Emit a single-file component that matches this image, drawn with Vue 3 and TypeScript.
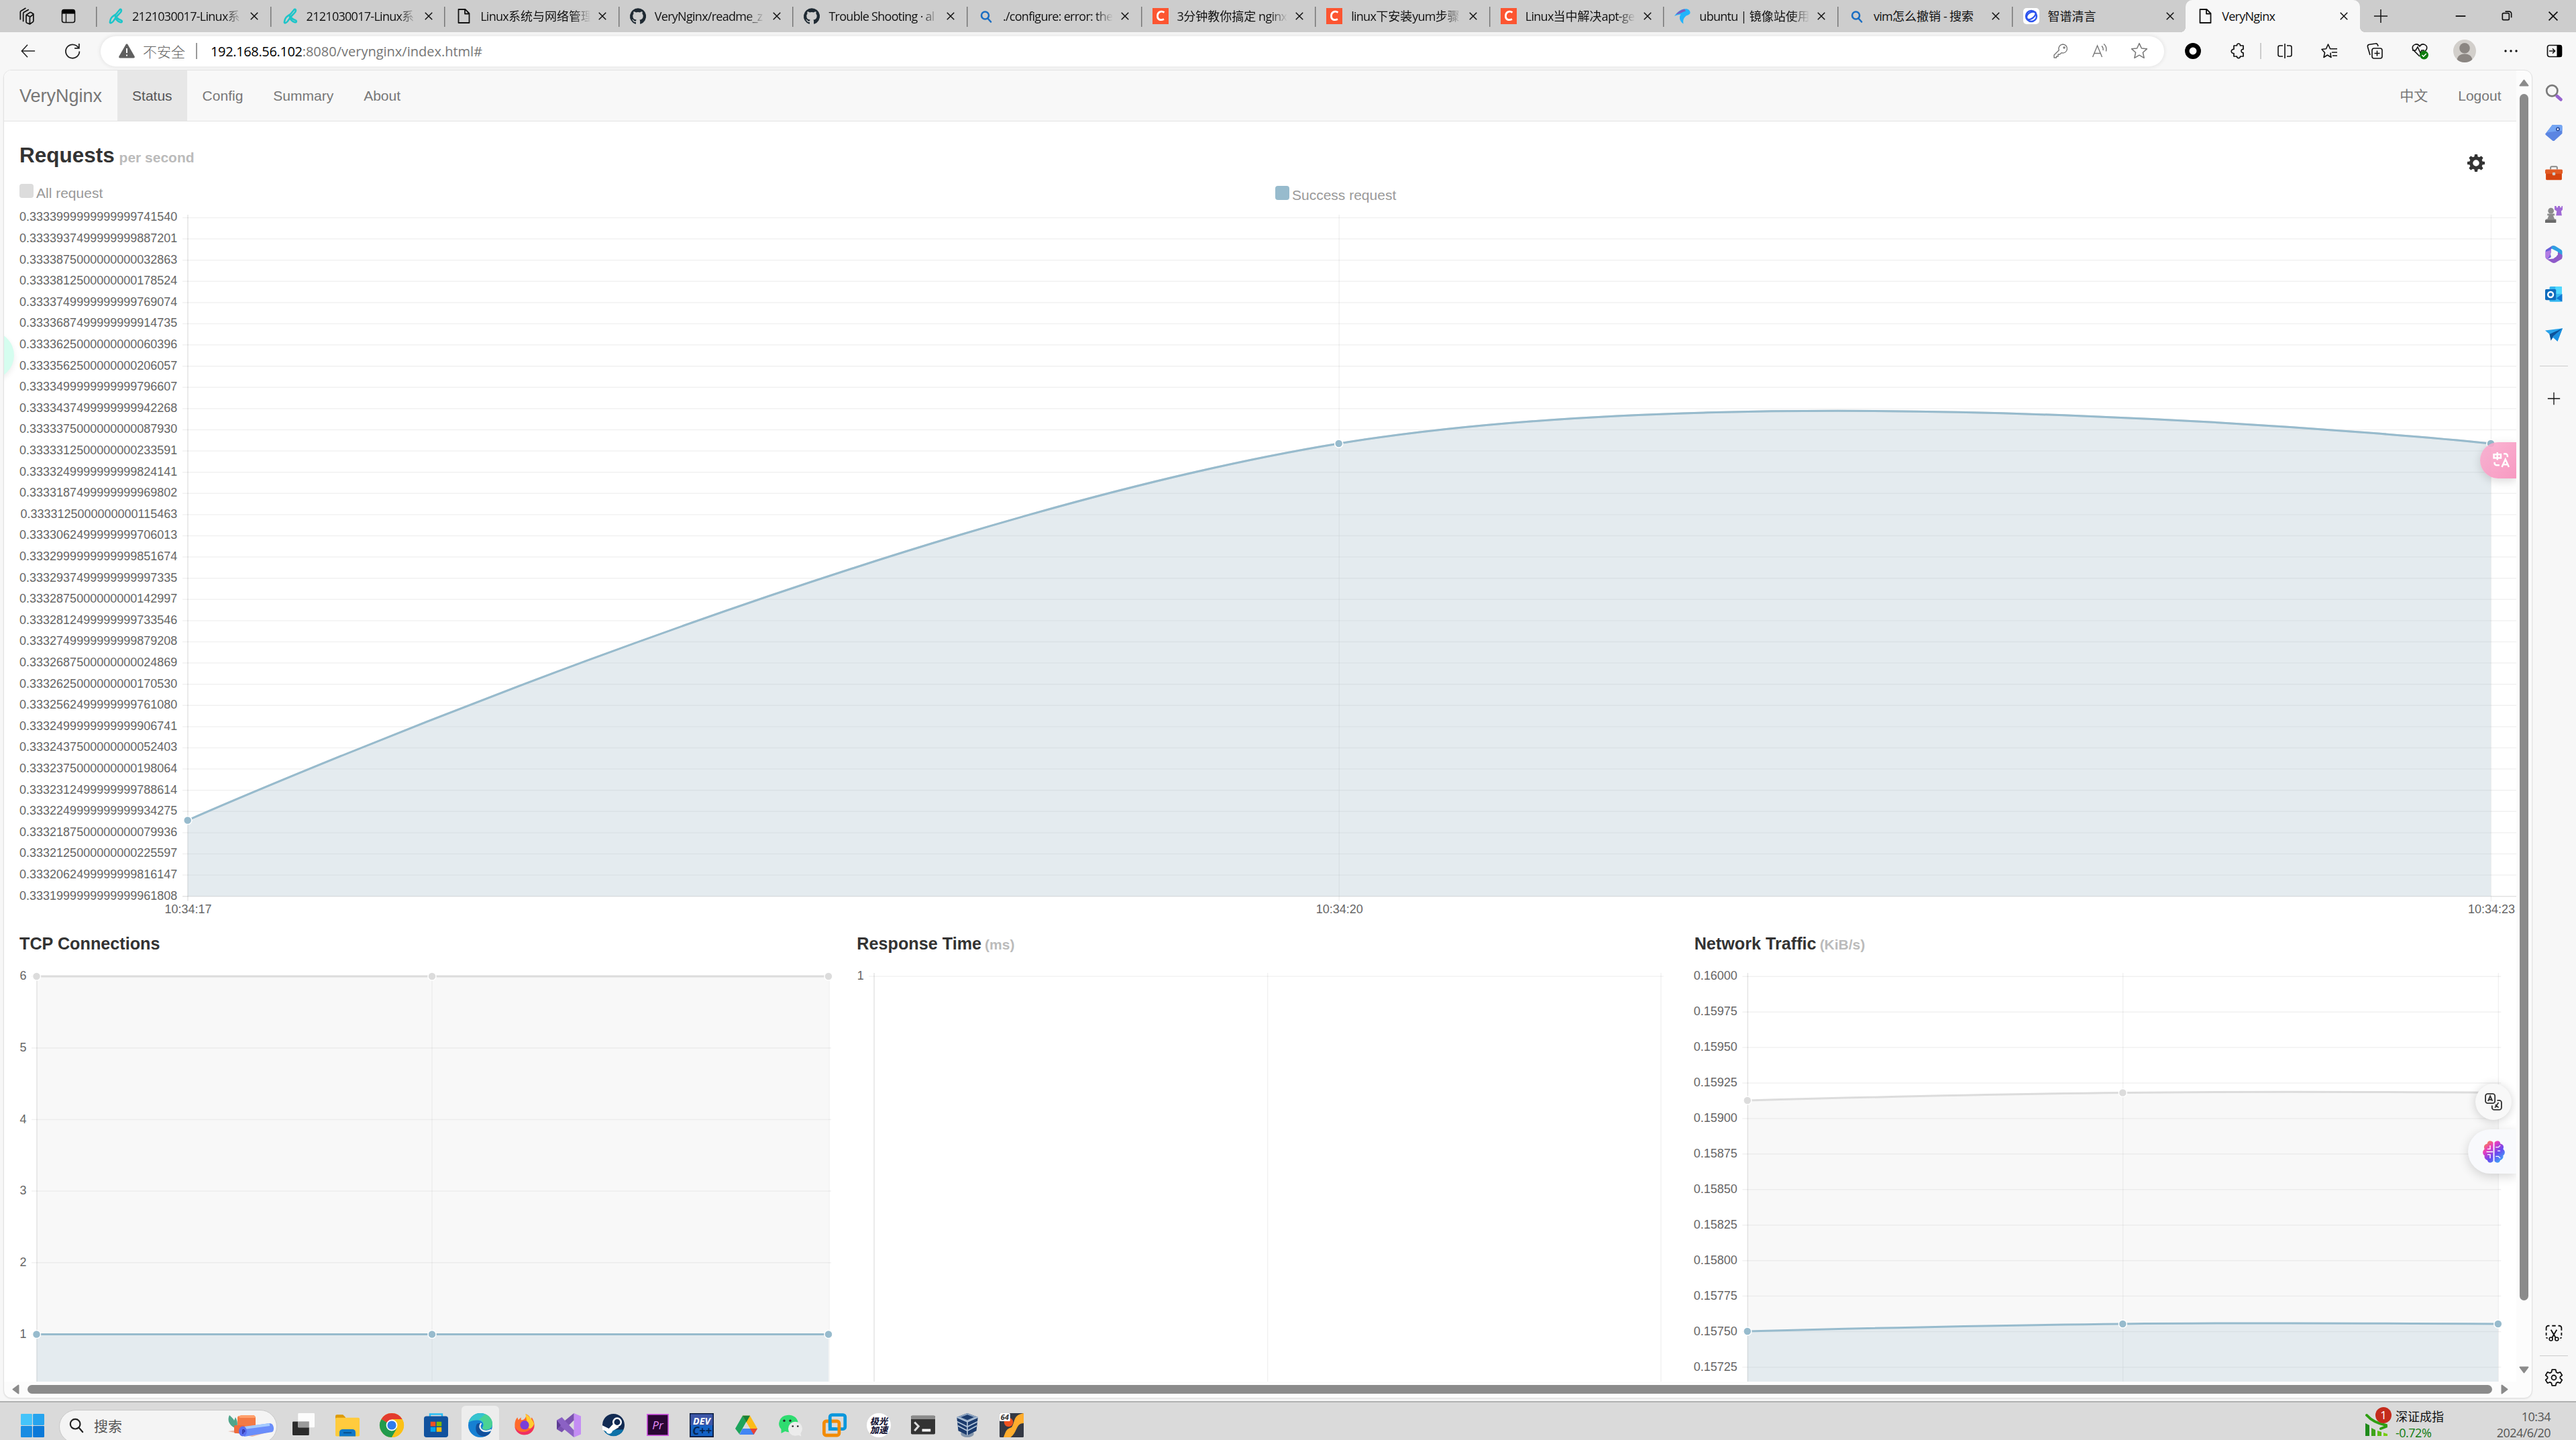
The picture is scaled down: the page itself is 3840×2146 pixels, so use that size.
<script setup lang="ts">
interface Series { color: string; fill: string; points: [number, number][] }
interface Chart {
  box: [number, number, number, number]
  xs: number[]
  rows: { y: number; label: string }[]
  right: number
  top: number
  bottom: number
  labelX: number
  times: string[]
  series: Series[]
}

const GREY = '#dcdcdc'
const GREY_FILL = 'rgba(220,220,220,0.2)'
const BLUE = '#97bbcd'
const BLUE_FILL = 'rgba(151,187,205,0.2)'

const rows = (start: number, step: number, labels: string[]) =>
  labels.map((label, i) => ({ label, y: start + i * step }))

// Smooths a three point line, the middle point carries the tension
function curve(p: [number, number][]): string {
  const [a, m, b] = p
  const d1 = Math.hypot(m[0] - a[0], m[1] - a[1])
  const d2 = Math.hypot(b[0] - m[0], b[1] - m[1])
  const f1 = (0.4 * d1) / (d1 + d2)
  const f2 = (0.4 * d2) / (d1 + d2)
  const dx = b[0] - a[0]
  const dy = b[1] - a[1]
  return `M${a[0]} ${a[1]}C${a[0]} ${a[1]} ${m[0] - f1 * dx} ${m[1] - f1 * dy} ${m[0]} ${m[1]}`
    + `C${m[0] + f2 * dx} ${m[1] + f2 * dy} ${b[0]} ${b[1]} ${b[0]} ${b[1]}`
}
const area = (s: Series, bottom: number) =>
  `${curve(s.points)}L${s.points[2][0]} ${bottom}L${s.points[0][0]} ${bottom}Z`

// Splits a tab title into Latin and Chinese runs, which are spaced differently
const runs = (s: string) =>
  (s.match(/[\u4e00-\u9fff]+|[^\u4e00-\u9fff]+/g) ?? []).map(text => ({ text, han: /[\u4e00-\u9fff]/.test(text) }))

const decimals = [
  '3333999999999999741540', '3333937499999999887201', '3333875000000000032863', '3333812500000000178524',
  '3333749999999999769074', '3333687499999999914735', '3333625000000000060396', '3333562500000000206057',
  '3333499999999999796607', '3333437499999999942268', '3333375000000000087930', '3333312500000000233591',
  '3333249999999999824141', '3333187499999999969802', '3333125000000000115463', '3333062499999999706013',
  '3332999999999999851674', '3332937499999999997335', '3332875000000000142997', '3332812499999999733546',
  '3332749999999999879208', '3332687500000000024869', '3332625000000000170530', '3332562499999999761080',
  '3332499999999999906741', '3332437500000000052403', '3332375000000000198064', '3332312499999999788614',
  '3332249999999999934275', '3332187500000000079936', '3332125000000000225597', '3332062499999999816147',
  '3331999999999999961808',
]
const reqPoints: [number, number][] = [[279.7, 1222.5], [1995.7, 661], [3713, 661]]

const requests: Chart = {
  box: [6, 305, 3745, 1086],
  xs: [280, 1996.3, 3713.5],
  rows: rows(324.5, 31.6, decimals.map(d => '0.' + d)),
  right: 3760, top: 320, bottom: 1335.7, labelX: 264.3,
  times: ['10:34:17', '10:34:20', '10:34:23'],
  series: [
    { color: GREY, fill: GREY_FILL, points: reqPoints },
    { color: BLUE, fill: BLUE_FILL, points: reqPoints },
  ],
}

const panels: { title: string; unit: string; chart: Chart }[] = [
  {
    title: 'TCP Connections', unit: '',
    chart: {
      box: [6, 1421, 1248.33, 638],
      xs: [55, 644, 1236], rows: rows(1455, 106.7, ['6', '5', '4', '3', '2', '1']),
      right: 1239, top: 1450, bottom: 2100, labelX: 39.5, times: [],
      series: [
        { color: GREY, fill: GREY_FILL, points: [[54.5, 1455], [644, 1455], [1235, 1455]] },
        { color: BLUE, fill: BLUE_FILL, points: [[54.5, 1988.5], [644, 1988.5], [1235, 1988.5]] },
      ],
    },
  },
  {
    title: 'Response Time', unit: '(ms)',
    chart: {
      box: [1254.33, 1421, 1248.33, 638],
      xs: [1303.4, 1890, 2476.3], rows: rows(1455, 100, ['1']),
      right: 2480, top: 1450, bottom: 2100, labelX: 1288, times: [], series: [],
    },
  },
  {
    title: 'Network Traffic', unit: '(KiB/s)',
    chart: {
      box: [2502.67, 1421, 1248.33, 638],
      xs: [2605, 3164.3, 3724],
      rows: rows(1455.2, 52.93, ['0.16000', '0.15975', '0.15950', '0.15925', '0.15900', '0.15875', '0.15850', '0.15825', '0.15800', '0.15775', '0.15750', '0.15725']),
      right: 3728, top: 1450, bottom: 2100, labelX: 2589.5, times: [],
      series: [
        { color: GREY, fill: GREY_FILL, points: [[2604.5, 1640], [3164, 1628.5], [3723.5, 1628.5]] },
        { color: BLUE, fill: BLUE_FILL, points: [[2604.5, 1984], [3164, 1973], [3723.5, 1973]] },
      ],
    },
  },
]

const tabs = [
  { icon: 'knot', label: '2121030017-Linux系', fade: true },
  { icon: 'knot', label: '2121030017-Linux系', fade: true },
  { icon: 'page', label: 'Linux系统与网络管理', fade: true },
  { icon: 'github', label: 'VeryNginx/readme_z', fade: true },
  { icon: 'github', label: 'Trouble Shooting · al', fade: true },
  { icon: 'find', label: './configure: error: the', fade: true },
  { icon: 'csdn', label: '3分钟教你搞定 nginx', fade: true },
  { icon: 'csdn', label: 'linux下安装yum步骤', fade: true },
  { icon: 'csdn', label: 'Linux当中解决apt-ge', fade: true },
  { icon: 'bird', label: 'ubuntu | 镜像站使用', fade: true },
  { icon: 'find', label: 'vim怎么撤销 - 搜索', fade: false },
  { icon: 'zhipu', label: '智谱清言', fade: false },
]

const icons: Record<string, string> = {
  spaces: '<g fill="none" stroke="#111" stroke-width="1.600" stroke-linejoin="round"><path d="M12 11.500a2 2 0 0 1 1-1.700l4-2.600a2 2 0 0 1 2 0l3 1.800v9.500a2 2 0 0 1-1 1.700L17 23l-4-1.500a1.500 1.500 0 0 1-1-1.500zM12.500 10.500l5 2.500 4.500-3.500M17 13v9.500M8 19.500V8.500a2 2 0 0 1 1-1.700L15.500 3M4 17V6.500a2 2 0 0 1 1-1.700L11.500 1"/></g>',
  pane: '<rect x="2.500" y="2.500" width="19" height="19" rx="3" fill="none" stroke="#111" stroke-width="1.600"/><path d="M2.500 8.500V5a3 3 0 0 1 3-3h13a3 3 0 0 1 3 3v3.500z" fill="#000"/><path d="M8.500 8.500v13" stroke="#111" stroke-width="1.300"/>',
  knot: '<g fill="none" stroke="#1cc5c9" stroke-width="2.600" stroke-linecap="round" stroke-linejoin="round"><path d="M4 20c1-7 5-8 9-11l5-6c2-3 4 0 2 3-3 4-7 6-10 12-2 4-7 6-6 2zM12 10c0 3 4 7 8 8 3 1 2 4-1 3-4-1-7-5-7-8"/></g>',
  page: '<path d="M4.500 2h10l6 6v14h-16zM14 2v6.500h6" fill="none" stroke="#111" stroke-width="1.800" stroke-linejoin="round"/>',
  github: '<path fill="#1f2a33" d="M12 .3a12 12 0 0 0-3.800 23.400c.6.100.8-.300.8-.600v-2.200c-3.300.700-4-1.400-4-1.400-.600-1.400-1.400-1.800-1.400-1.800-1-.700.100-.700.100-.700 1.200.100 1.900 1.200 1.900 1.200 1 1.800 2.800 1.300 3.500 1 0-.800.400-1.300.700-1.600-2.700-.300-5.500-1.300-5.500-6 0-1.200.500-2.300 1.300-3.100-.200-.400-.600-1.600 0-3.200 0 0 1-.300 3.400 1.200a11.500 11.500 0 0 1 6 0c2.300-1.500 3.300-1.200 3.300-1.200.700 1.600.200 2.800.100 3.200.8.800 1.300 1.900 1.300 3.200 0 4.600-2.800 5.600-5.500 5.900.5.400.9 1 .9 2.200v3.300c0 .300.100.700.800.600A12 12 0 0 0 12 .3"/>',
  find: '<g fill="none" stroke="#1b6ec2" stroke-width="2.600" stroke-linecap="round"><circle cx="10.500" cy="11" r="5.500"/><path d="M14.500 15.500l4.500 5"/></g>',
  csdn: '<rect width="24" height="24" fill="#fc5531"/><path d="M17.500 6.500c-4-2.500-9.500-1.500-10 4.500-.4 6.500 4.500 8 9.500 5.500" fill="none" stroke="#fff" stroke-width="2.800"/>',
  bird: '<path d="M0 12C4 6 9 2 15 1.500c5-1 9 2 8.500 6-1 3-5 3-7 5-3 3-4 6-3 11-6-4-7-10-4-14-3 0-6 1-9.500 2.500z" fill="#22b4fb"/><path d="M2 9.500C6 5 10 2.500 15 1.500l2 3C12 6 7 9 2 9.500z" fill="#7d5bc0"/>',
  zhipu: '<rect width="24" height="24" rx="5" fill="#fff"/><g fill="none" stroke="#2d54ee" stroke-width="2.400"><circle cx="12" cy="12" r="8"/><path d="M19 7C14 3 5 8 5 14c1 7 12 1 14-6"/></g>',
  close: '<path d="M5 5l14 14M19 5L5 19" stroke="#111" stroke-width="2" />',
  plus: '<path d="M12 1v22M1 12h22" stroke="#111" stroke-width="1.600"/>',
  min: '<path d="M4 12h16" stroke="#111" stroke-width="2"/>',
  restore: '<g fill="none" stroke="#111" stroke-width="2"><rect x="4" y="8" width="12" height="12" rx="2"/><path d="M9 5h7a4 4 0 0 1 4 4v7"/></g>',
  back: '<path d="M23 12H2M11 2L1.500 12 11 22" fill="none" stroke="#222" stroke-width="1.700"/>',
  reload: '<path d="M21.500 12A9.800 9.800 0 1 1 18 4.500L20.500 7M21 1v6.500h-6.500" fill="none" stroke="#222" stroke-width="1.700"/>',
  warn: '<path d="M12 1.500c1 0 1.300.600 1.700 1.200L23.600 20c.6 1.500 0 2.500-1.600 2.500H2C.4 22.500-.2 21.500.4 20L10.300 2.700C10.700 2.100 11 1.500 12 1.500z" fill="#5f5f5f"/><path d="M12 8v7M12 17.500v2" stroke="#fff" stroke-width="2"/>',
  key: '<g fill="none" stroke="#777" stroke-width="1.400" stroke-linejoin="round"><path d="M15 2a6.500 6.500 0 1 1-2 12.700L10.500 17H8v3H5.500v2H2v-4l7.300-7.200A6.500 6.500 0 0 1 15 2z"/><circle cx="17" cy="7" r="1"/></g>',
  read: '<path d="M1.500 21L8.500 4l7 17M4 15.500h9M15 4.500c2 2 2.500 4 2 6.500M18 1.500c4 3 4.500 7 3.500 11" fill="none" stroke="#777" stroke-width="1.400"/>',
  star: '<path d="M12 1.500l3.100 6.800 7.400.8-5.500 5 1.600 7.400-6.600-3.800-6.600 3.800L7 14.100l-5.500-5 7.400-.8z" fill="none" stroke="#777" stroke-width="1.400" stroke-linejoin="round"/>',
  ring: '<circle cx="12" cy="12" r="8.700" fill="#fff" stroke="#000" stroke-width="6.500"/>',
  puzzle: '<path d="M6 4h4.500c-.5-4 5.500-4 5 0H20v5.500c-4-.5-4 5.500 0 5V20h-4.500c.5 3.500-5.500 3.500-5 0H6v-4.500c-5 .500-5-6.500 0-6z" fill="none" stroke="#111" stroke-width="1.700" stroke-linejoin="round"/>',
  split: '<path d="M9 4H4.500A2.500 2.500 0 0 0 2 6.500v11A2.500 2.500 0 0 0 4.500 20H9M15 4h4.500A2.500 2.500 0 0 1 22 6.500v11a2.500 2.500 0 0 1-2.500 2.500H15M12 1v22" fill="none" stroke="#111" stroke-width="1.600"/>',
  favs: '<path d="M13.500 14.500l-.5 2 1 5-5.500-3.500L3 21.500l1.500-7L0 9.500l6.500-.7L9.500 2l3 6.800H23M15 14h8M16 19h7" fill="none" stroke="#111" stroke-width="1.600" stroke-linejoin="round"/>',
  collect: '<g fill="none" stroke="#111" stroke-width="1.600"><rect x="8" y="8" width="15" height="15" rx="3"/><path d="M15.500 11.500v8M11.500 15.500h8M5 18l-3.500-12A3 3 0 0 1 3 2.500l10-1.500a3 3 0 0 1 3.500 2l.5 2"/></g>',
  health: '<path d="M12 20L2 10C-1 3 8-1 12 5c4-6 13-2 10 5l-2 2M1 11h5l3-5 4 9 2-4h4" fill="none" stroke="#111" stroke-width="1.600"/><circle cx="18.500" cy="18" r="6.500" fill="#107c10"/><path d="M15.500 18l2.200 2.200 4-4.200" fill="none" stroke="#fff" stroke-width="1.500"/>',
  avatar: '<circle cx="12" cy="12" r="12" fill="#d2cfcb"/><circle cx="12" cy="9" r="5.500" fill="#8b8682"/><path d="M4 21c1-8 15-8 16 0a12 12 0 0 1-16 0z" fill="#8b8682"/>',
  dots: '<g fill="#111"><circle cx="4" cy="12" r="1.700"/><circle cx="12" cy="12" r="1.700"/><circle cx="20" cy="12" r="1.700"/></g>',
  side: '<rect x="1.500" y="3.500" width="21" height="17" rx="3" fill="none" stroke="#111" stroke-width="1.700"/><path d="M15.500 3h5a2.500 2.500 0 0 1 2.500 2.500v13a2.500 2.500 0 0 1-2.500 2.500h-5z" fill="#000"/><path d="M4 12h8M9 8.500l3.500 3.500L9 15.500" fill="none" stroke="#111" stroke-width="1.700"/>',
  sSearch: '<circle cx="9.500" cy="9.500" r="7.500" fill="none" stroke="#7b7b7b" stroke-width="2.500"/><path d="M16.500 17l5 4.500" stroke="#9764cf" stroke-width="4.500" stroke-linecap="round"/>',
  tag: '<path d="M10 1h11c1.500 0 2.500 1 2.500 2v10L13 22.500c-1 .800-2 .800-3 0L1 15c-1-1-1-2 0-2.500z" fill="#5b85e2"/><path d="M10 1h11c1.500 0 2.500 1 2.500 2v6L2 11.500z" fill="#74a5f3"/><circle cx="17.500" cy="7" r="2" fill="#fff" stroke="#2a4b9b" stroke-width="1.500"/>',
  toolbox: '<path d="M7.500 7V4.500A1.500 1.500 0 0 1 9 3h6a1.500 1.500 0 0 1 1.500 1.500V7" fill="none" stroke="#8a8a8a" stroke-width="1.800"/><path d="M1 12h22v8a1.500 1.500 0 0 1-1.500 1.500h-19A1.500 1.500 0 0 1 1 20z" fill="#d6440f"/><rect y="7" width="24" height="6" rx="1.500" fill="#e25b24"/><rect x="10" y="11" width="4" height="4" rx="1" fill="#ccc"/>',
  chess: '<g fill="#8c8c8c"><circle cx="8" cy="7.500" r="4"/><path d="M3 11.500h10V14h-2l2 5h2v4H1v-4h2l2-5H3z"/></g><path d="M13 1h2.500v2h2V1h3v2h2V1H24v5l-2 2 1 6h-8l1-6-3-2z" fill="#a06ad6"/><path d="M0 20h15v4H0z" fill="#6a6a6a"/>',
  m365: '<path d="M1.500 5.500L9 .8c1.500-.8 3-.8 4.500 0L8 5v11l-5 3c-1.500-.500-2.500-2-2.500-3.500V8c0-1 .3-2 1-2.500z" fill="#6a5fd8"/><path d="M9 .8c1.500-.8 3.500-.8 5 0l7.500 4.500C23 6.300 23.500 7 23.500 8.500V16l-6-3.500V8.500L8.500 4z" fill="#2f9fe2"/><path d="M8 6v5l-5 8c-1-.4-2.500-2-2.500-3.500V8.500z" fill="#b27be3"/><path d="M23.500 13v3c0 1.500-.5 2.500-1.500 3l-7.500 4.300c-1.500.8-3.500.8-5 0L2.500 19l9-1 6-5.500V9z" fill="#8f5ac9"/><circle cx="12" cy="12" r="4.500" fill="#f7f7f7"/>',
  outlook: '<rect x="6" y="1" width="17" height="21" rx="1.500" fill="#35b8f1"/><path d="M14 1h9v10h-9z" fill="#50d9ff"/><path d="M23.500 11v11l-8-5z" fill="#0f78d4"/><rect x="0" y="4.500" width="15" height="15" rx="1.500" fill="#0f6cbd"/><circle cx="7.500" cy="12" r="3.600" fill="none" stroke="#fff" stroke-width="2.300"/>',
  plane: '<path d="M0 6l24-3-7 18-6-5-3 3-2-8z" fill="#2aa3ea"/><path d="M24 3L6 11l2 9 3-6z" fill="#0d5299"/><path d="M24 3L11 14l6 7z" fill="#1b8fe0"/>',
  snip: '<path d="M1.500 9V5.500a3 3 0 0 1 3-3H6M9.500 2.500h5M18 2.500h1.500a3 3 0 0 1 3 3V9M22.500 12v4M1.500 12v4M1.500 18.500c.500 1 1 1 2 1M22.500 18.500c-.500 1-1 1-2 1M8 8l6.500 11M16 8L9.500 19" fill="none" stroke="#111" stroke-width="1.700"/><g fill="none" stroke="#111" stroke-width="1.500"><circle cx="8" cy="20.800" r="2.300"/><circle cx="16" cy="20.800" r="2.300"/></g>',
  cog: '<g fill="none" stroke="#111" stroke-width="1.700" stroke-linejoin="round"><path d="M9.500 1h5l.8 3.500 2 1.200 3.500-1.200 2.500 4.300L20.700 11v2l2.600 2.200-2.500 4.300-3.500-1.200-2 1.200-.8 3.500h-5l-.8-3.500-2-1.200-3.500 1.200L.7 15.200 3.300 13v-2L.7 8.800l2.500-4.300 3.500 1.200 2-1.200z"/><circle cx="12" cy="12" r="3.200"/></g>',
  gear: '<path fill="#333" fill-rule="evenodd" d="M10.200 0h3.600l.6 3.200 2 .800L19.200 2.200l2.600 2.600L20 7.600l.8 2 3.200.6v3.600l-3.200.6-.8 2 1.800 2.800-2.600 2.600-2.800-1.800-2 .8-.6 3.200h-3.600l-.6-3.200-2-.8-2.800 1.800-2.600-2.600L4 16.400l-.8-2L0 13.800v-3.600l3.200-.6.8-2L2.200 4.800l2.600-2.600L7.600 4l2-.8zM12 7.600a4.400 4.400 0 1 0 0 8.800 4.400 4.400 0 0 0 0-8.800z"/>',
  win: '<g fill="#1f9ae8"><rect width="11.600" height="11.600" rx=".8" fill="#44c4fa"/><rect x="12.400" width="11.600" height="11.600" rx=".8" fill="#26a4ee"/><rect y="12.400" width="11.600" height="11.600" rx=".8" fill="#188ce2"/><rect x="12.400" y="12.400" width="11.600" height="11.600" rx=".8" fill="#0b79d8"/></g>',
  find2: '<g fill="none" stroke="#222" stroke-width="2.400" stroke-linecap="round"><circle cx="10" cy="10" r="8"/><path d="M16 16l6 7"/></g>',
  task: '<rect x="0" y="9" width="18" height="15" rx="1" fill="#2b2b2b"/><rect x="6" y="0" width="18" height="15.500" rx="1" fill="#fff" opacity=".92"/><path d="M6 9h12v6.500H6z" fill="#9b9b9b"/>',
  folder: '<path d="M0 3a1.500 1.500 0 0 1 1.500-1.500h6L10 4v3H0z" fill="#dc9a0a"/><rect y="4.500" width="24" height="18.500" rx="1.200" fill="#ffcb3d"/><path d="M4 23v-4a3 3 0 0 1 3-3h10a3 3 0 0 1 3 3v4z" fill="#0f78c9"/><path d="M8 19.500h8" stroke="#084d87" stroke-width="1.200"/>',
  chrome: '<circle cx="12" cy="12" r="12" fill="#fbc116"/><path d="M12 12L1.600 6A12 12 0 0 1 22.400 6z" fill="#e33b2e"/><path d="M12 12L1.600 6A12 12 0 0 0 12 24l5.200-9z" fill="#229b4c"/><path d="M12 12V6h10.400A12 12 0 0 1 12 24l5.200-9z" fill="#fbc116"/><circle cx="12" cy="12" r="5.600" fill="#fff"/><circle cx="12" cy="12" r="4.400" fill="#2f7bea"/>',
  store: '<path d="M6 4V1h12v3" fill="none" stroke="#26bdf5" stroke-width="1.600"/><rect y="3" width="24" height="21" rx="2.500" fill="#11529e"/><path d="M6.500 8.500h5v4.500h-5z" fill="#f25022"/><path d="M12.500 8.500h5v4.500h-5z" fill="#7fba00"/><path d="M6.500 14h5v4.500h-5z" fill="#00a4ef"/><path d="M12.500 14h5v4.500h-5z" fill="#ffb900"/>',
  edge: '<circle cx="12" cy="12" r="12" fill="#1680d3"/><path d="M.3 9.500C2 3 7 0 12 0c7 0 12 5 12 10.500 0 4-3 6-6.500 6-3 0-4-1.500-3-3 1.500-3-1-6.500-5-6.500-4 0-8 1-9.200 2.500z" fill="#35c4cf"/><path d="M17 1c5 2 7 6 7 9.500 0 4-3 6-6.500 6-3 0-4-1.500-3-3 2-3 0-7-4-7z" fill="#54d87a" opacity=".7"/><path d="M8 12c-2 6 2 12 9 11 3-1 5-3 5.500-5-4 2-9 1-11-3-1-2 0-4 1-5-2-.500-4 0-4.500 2z" fill="#114f9c"/><path d="M13 10c-2 2-2 5 1 7 2 1.500 6 1 9-.5" fill="none" stroke="#f1f1f1" stroke-width="1.500"/>',
  firefox: '<path d="M12 23.500C5 23.500 1 18 1 12.500 1 9 2 6 4 4l1 3 3-3v3c3 0 4-1 5-3 1-1.500 1-3 0-4 3 1 5 3 6 6l1-2c2 3 3 6 3 9 0 6-5 10.500-11 10.500z" fill="#ff6a2a"/><path d="M13 0c4 2 8 7 9.500 11-1 4-4 6-6 5C15 9 14 7 13 0z" fill="#ffcd31"/><circle cx="12" cy="12.500" r="5" fill="#7a3fd8"/><path d="M1 14c2 5 7 7 12 6 4-1 8-4 9.500-8 .5 7-5 11.500-10.500 11.500S1.500 20 1 14z" fill="#ef2f64"/>',
  vs: '<path d="M17 0l7 3v18l-7 3z" fill="#c48df4"/><path d="M17 0v7L5 19l-5-3v-2z" fill="#7a52b0"/><path d="M5 4l12 13v7L0 10V7z" fill="#8b61c4"/><path d="M0 7l4 5-4 4z" fill="#5c3a92"/>',
  steam: '<circle cx="12" cy="12" r="12" fill="#112a52"/><path d="M1 17a12 12 0 0 0 22 0z" fill="#0d72a8"/><path d="M0 12.500l7 3.500 5-5.500 6 4-7 4c-1 4-6 4-7 .500l-4-2z" fill="#fff"/><circle cx="16" cy="9" r="4.200" fill="#112a52" stroke="#fff" stroke-width="1.800"/>',
  pr: '<rect x=".6" y=".6" width="22.800" height="22.800" fill="#2a0634" stroke="#d65ce8" stroke-width="1.200"/><text x="12" y="16.500" font-size="12.500" fill="#e389f5" text-anchor="middle" font-family="Open Sans">Pr</text>',
  dev: '<rect x=".6" y=".6" width="22.800" height="22.800" fill="#1461c4" stroke="#0a1a3a" stroke-width="1.200"/><path d="M1 1h22v11H1z" fill="#3e57a8"/><text x="12" y="11" font-size="9.500" font-weight="700" fill="#fff" text-anchor="middle" font-family="Open Sans">DEV</text><text x="12.500" y="21.500" font-size="11" font-weight="700" fill="#062551" text-anchor="middle" font-family="Open Sans">C++</text>',
  drive: '<path d="M8 2h8l-4 6.500L4.500 22 0 16z" fill="#1da45c"/><path d="M8 2h8l8 14h-8z" fill="#fcbc17"/><path d="M8 2h8l-4 7z" fill="#188038"/><path d="M8 16h16l-4 6.500H4.500z" fill="#4285f4"/><path d="M16 16h8l-4 6.500z" fill="#ea4335"/><path d="M12 9l4 7H8z" fill="#dadada"/>',
  wechat: '<path d="M9 2a9 8.500 0 1 1-2 16l-4 2v-4A9 8.500 0 0 1 9 2z" fill="#2fdc70"/><circle cx="17" cy="15.500" r="7" fill="#ececec"/><path d="M18 21l5 2-1-4z" fill="#ececec"/><g fill="#222"><circle cx="6" cy="7.500" r="1.100"/><circle cx="12" cy="7.500" r="1.100"/><circle cx="14.500" cy="13" r=".9"/><circle cx="19.500" cy="13" r=".9"/></g>',
  vmware: '<rect x="7.500" y="1.700" width="15" height="14" rx="2" fill="none" stroke="#0a97dc" stroke-width="3.200"/><rect x="1.600" y="8" width="15" height="14" rx="2" fill="none" stroke="#f28b05" stroke-width="3.200"/><path d="M7.500 6v9.700h6" fill="none" stroke="#0a97dc" stroke-width="3.200"/>',
  jiguang: '<circle cx="12" cy="12" r="12" fill="#fff"/><g font-size="8.800" font-weight="900" text-anchor="middle" font-family="Noto Sans CJK SC" fill="#1c1c3c"><text x="12" y="11.500">极光</text><text x="12" y="19.700">加速</text></g>',
  term: '<rect y="2.500" width="24" height="18.500" rx="1.200" fill="#333"/><path d="M0 6V3.700A1.200 1.200 0 0 1 1.200 2.500h21.600A1.200 1.200 0 0 1 24 3.700V6z" fill="#8a8a8a"/><path d="M3.500 9l4 4-4 4.500" fill="none" stroke="#ddd" stroke-width="2"/><path d="M11 17h8.500" stroke="#fff" stroke-width="2.600"/>',
  vbox: '<ellipse cx="12" cy="20.500" rx="6.500" ry="3.500" fill="#8496ac"/><path d="M12 0l10.500 4-1.500 13.500-9 4.500-9-4.500L1.500 4z" fill="#1c3c6e"/><path d="M12 0l10.500 4L12 8.500 1.500 4z" fill="#8ea5c2"/><path d="M12 1.500L18.500 4 12 6.800 5.500 4z" fill="#1c3c6e"/><path d="M12 8.500V22M2 8.500l10 5 10-5M2.500 12.500l9.500 5 9.500-5M1.500 4L12 8.500 22.500 4" stroke="#b4c6da" stroke-width="1.100" fill="none"/>',
  calc64: '<rect width="24" height="24" rx="1" fill="#343944"/><path d="M24 0v10c-8 0-6 9-13 14H4c3-8 3-8 8-10 4-6 1-12 12-14z" fill="#ffad2e"/><circle cx="9" cy="9" r="4.500" fill="#f0521f"/><rect width="10.500" height="8" rx="1" fill="#fff"/><text x="5.200" y="6.700" font-size="7.500" font-weight="700" fill="#333" text-anchor="middle" font-family="Open Sans">64</text>',
  trans: '<g fill="none" stroke="#fff" stroke-width="2.400"><path d="M1 4h10v5H1zM6 1v11M15 3h2.500a3 3 0 0 1 3 3v2M2 15v1.500a3 3 0 0 0 3 3h4M12.500 22L17.500 11l5 11M14.500 18.500h6"/></g>',
  aTrans: '<g fill="none" stroke="#333" stroke-width="1.700"><rect x="1" y="1" width="13" height="13" rx="3"/><path d="M4.500 11l3-7 3 7M5.500 9h4M17 10h3a3 3 0 0 1 3 3v7a3 3 0 0 1-3 3h-7a3 3 0 0 1-3-3v-3M19 13l-5 7M14.500 16l4.500 4"/></g>',
  brain: '<defs><linearGradient id="bg" gradientUnits="userSpaceOnUse" x1="2" y1="0" x2="22" y2="24"><stop offset="0" stop-color="#fb9a32"/><stop offset=".3" stop-color="#e83cc0"/><stop offset=".6" stop-color="#6a4af0"/><stop offset="1" stop-color="#2fc0fc"/></linearGradient></defs><path d="M11.300 2C9-1 5 0 5 3 1 4 1 7 2 9c-3 2-2 6 0 7-1 3 2 5 3 5 1 4 5 3 6.300 1zM12.700 2C15-1 19 0 19 3c4 1 4 4 3 6 3 2 2 6 0 7 1 3-2 5-3 5-1 4-5 3-6.300 1z" fill="url(#bg)"/><path d="M4 12h7M8 5v4H5M8 19v-4H5M14 7h3l2-2M14 17h3l2 2M16 11h3" fill="none" stroke="#fff" stroke-width="1"/>',
}

const tools1 = ['ring', 'puzzle']
const tools2 = ['split', 'favs', 'collect', 'health', 'avatar', 'dots']
const sideIcons = ['sSearch', 'tag', 'toolbox', 'chess', 'm365', 'outlook', 'plane']
const taskIcons = ['task', 'folder', 'chrome', 'store', 'edge', 'firefox', 'vs', 'steam', 'pr', 'dev', 'drive', 'wechat', 'vmware', 'jiguang', 'term', 'vbox', 'calc64']
const charts = [requests]
</script>

<template>
  <div class="screen">
    <div class="tabs">
      <div class="lead">
        <svg class="i26" viewBox="0 0 24 24" v-html="icons.spaces" />
        <svg class="i24" viewBox="0 0 24 24" v-html="icons.pane" />
      </div>
      <div v-for="(t, i) in tabs" :key="i" class="tab">
        <svg class="i24" viewBox="0 0 24 24" v-html="icons[t.icon]" />
        <span class="tab-label" :class="{ fade: t.fade }"><span v-for="(r, k) in runs(t.label)" :key="k" :class="{ han: r.han }">{{ r.text }}</span></span>
        <svg class="i18" viewBox="0 0 24 24" v-html="icons.close" />
      </div>
      <div class="tab active">
        <svg class="i24" viewBox="0 0 24 24" v-html="icons.page" />
        <span class="tab-label">VeryNginx</span>
        <svg class="i18" viewBox="0 0 24 24" v-html="icons.close" />
      </div>
      <svg class="new-tab" viewBox="0 0 24 24" v-html="icons.plus" />
      <div class="win-buttons">
        <span><svg class="i22" viewBox="0 0 24 24" v-html="icons.min" /></span>
        <span><svg class="i20" viewBox="0 0 24 24" v-html="icons.restore" /></span>
        <span><svg class="i22" viewBox="0 0 24 24" v-html="icons.close" /></span>
      </div>
    </div>

    <div class="toolbar">
      <svg class="back" viewBox="0 0 24 24" v-html="icons.back" />
      <svg class="reload" viewBox="0 0 24 24" v-html="icons.reload" />
      <div class="address">
        <svg class="i24" viewBox="0 0 24 24" v-html="icons.warn" />
        <span class="insecure">不安全</span>
        <i class="bar" />
        <span class="url"><b>192.168.56.102</b>:8080/verynginx/index.html#</span>
        <div class="addr-icons">
          <svg class="i24" viewBox="0 0 24 24" v-html="icons.key" />
          <svg class="i24" viewBox="0 0 24 24" v-html="icons.read" />
          <svg class="i26" viewBox="0 0 24 24" v-html="icons.star" />
        </div>
      </div>
      <span v-for="n in tools1" :key="n" class="tool"><svg class="i24" viewBox="0 0 24 24" v-html="icons[n]" /></span>
      <i class="bar light" />
      <span v-for="n in tools2" :key="n" class="tool" :class="n"><svg class="i24" viewBox="0 0 24 24" v-html="icons[n]" /></span>
      <span class="tool last"><svg class="i24" viewBox="0 0 24 24" v-html="icons.side" /></span>
    </div>

    <div class="body">
      <div class="page">
        <div class="content">
          <nav class="navbar">
            <span class="brand">VeryNginx</span>
            <span class="item on">Status</span>
            <span class="item">Config</span>
            <span class="item">Summary</span>
            <span class="item">About</span>
            <span class="item push">中文</span>
            <span class="item">Logout</span>
          </nav>
          <div class="head">
            <h3>Requests <small>per second</small></h3>
            <svg class="gear" viewBox="0 0 24 24" v-html="icons.gear" />
          </div>
          <div class="legend">
            <div><i class="sw grey" />All request</div>
            <div class="second"><i class="sw blue" />Success request</div>
          </div>

          <svg v-for="(c, k) in charts" :key="k" class="chart" :width="c.box[2]" :height="c.box[3]" :viewBox="c.box.join(' ')">
            <g stroke="rgba(0,0,0,0.055)" stroke-width="1.5">
              <line v-for="r in c.rows" :key="r.y" :x1="c.xs[0] - 8" :x2="c.right" :y1="r.y" :y2="r.y" />
              <line v-for="x in c.xs" :key="x" :x1="x" :x2="x" :y1="c.top" :y2="c.bottom + 7" />
              <line :x1="c.xs[0]" :x2="c.xs[0]" :y1="c.top" :y2="c.bottom + 7" />
              <line :x1="c.xs[0] - 8" :x2="c.right" :y1="c.bottom" :y2="c.bottom" />
            </g>
            <g class="labels">
              <text v-for="r in c.rows" :key="r.label" :x="c.labelX" :y="r.y + 4.8" text-anchor="end">{{ r.label }}</text>
              <text v-for="(t, i) in c.times" :key="t" :x="c.xs[i] + 0.5" y="1361" text-anchor="middle">{{ t }}</text>
            </g>
            <g v-for="(s, i) in c.series" :key="i">
              <path :d="area(s, c.bottom)" :fill="s.fill" />
              <path :d="curve(s.points)" :stroke="s.color" fill="none" stroke-width="3" />
            </g>
            <template v-for="(s, i) in c.series" :key="i">
              <circle v-for="p in s.points" :key="p[0]" :cx="p[0]" :cy="p[1]" r="6" :fill="s.color" stroke="#fff" stroke-width="1.500" />
            </template>
          </svg>

          <div class="panels">
            <section v-for="p in panels" :key="p.title" class="panel">
              <h4>{{ p.title }} <small>{{ p.unit }}</small></h4>
              <svg class="chart" :width="p.chart.box[2]" :height="p.chart.box[3]" :viewBox="p.chart.box.join(' ')">
                <g stroke="rgba(0,0,0,0.055)" stroke-width="1.5">
                  <line v-for="r in p.chart.rows" :key="r.y" :x1="p.chart.xs[0] - 8" :x2="p.chart.right" :y1="r.y" :y2="r.y" />
                  <line v-for="x in p.chart.xs" :key="x" :x1="x" :x2="x" :y1="p.chart.top" :y2="p.chart.bottom" />
                  <line :x1="p.chart.xs[0]" :x2="p.chart.xs[0]" :y1="p.chart.top" :y2="p.chart.bottom" />
                </g>
                <g class="labels">
                  <text v-for="r in p.chart.rows" :key="r.label" :x="p.chart.labelX" :y="r.y + 5.2" text-anchor="end">{{ r.label }}</text>
                </g>
                <g v-for="(s, i) in p.chart.series" :key="i">
                  <path :d="area(s, p.chart.bottom)" :fill="s.fill" />
                  <path :d="curve(s.points)" :stroke="s.color" fill="none" stroke-width="3" />
                  <circle v-for="q in s.points" :key="q[0]" :cx="q[0]" :cy="q[1]" r="6" :fill="s.color" stroke="#fff" stroke-width="1.500" />
                </g>
              </svg>
            </section>
          </div>

          <div class="blob" />
          <div class="pink"><svg viewBox="0 0 24 24" v-html="icons.trans" /></div>
          <div class="float-a"><svg viewBox="0 0 24 24" v-html="icons.aTrans" /></div>
          <div class="float-b"><svg viewBox="0 0 24 24" v-html="icons.brain" /></div>
        </div>
        <div class="vscroll">
          <svg width="15" height="11" viewBox="0 0 15 11"><path d="M7.500 1.500L13.500 9.500H1.500z" fill="#8b8b8b" stroke="#8b8b8b" stroke-width="2" stroke-linejoin="round" /></svg>
          <i />
          <svg class="down" width="15" height="11" viewBox="0 0 15 11"><path d="M7.500 9.500L13.500 1.500H1.500z" fill="#8b8b8b" stroke="#8b8b8b" stroke-width="2" stroke-linejoin="round" /></svg>
        </div>
        <div class="hscroll">
          <svg width="11" height="15" viewBox="0 0 11 15"><path d="M1.500 7.500L9.500 1.500v12z" fill="#8b8b8b" stroke="#8b8b8b" stroke-width="2" stroke-linejoin="round" /></svg>
          <i />
          <svg width="11" height="15" viewBox="0 0 11 15"><path d="M9.500 7.500L1.500 1.500v12z" fill="#8b8b8b" stroke="#8b8b8b" stroke-width="2" stroke-linejoin="round" /></svg>
        </div>
      </div>
      <aside class="sidebar">
        <span v-for="n in sideIcons" :key="n"><svg class="i26" viewBox="0 0 24 24" v-html="icons[n]" /></span>
        <hr class="first">
        <span class="add"><svg viewBox="0 0 24 24" v-html="icons.plus" /></span>
        <span class="snip"><svg class="i26" viewBox="0 0 24 24" v-html="icons.snip" /></span>
        <hr class="second-line">
        <span class="cog"><svg class="i26" viewBox="0 0 24 24" v-html="icons.cog" /></span>
      </aside>
    </div>

    <div class="taskbar">
      <svg class="start" viewBox="0 0 24 24" v-html="icons.win" />
      <div class="search">
        <svg class="i22" viewBox="0 0 24 24" v-html="icons.find2" />
        <span>搜索</span>
        <svg class="art" viewBox="0 0 70 33">
          <path d="M0 25l30-4 38 3-32 9z" fill="#e9b8a8" />
          <path d="M10 20C0 15-1 7 2 1c4 4 6 5 7 8l2-5c4 7 3 12 2 16z" fill="#4fa58b" />
          <rect x="14" y="2" width="27" height="18" rx="3" fill="#f37a45" /><path d="M15 3l4-2h20l2 4H18z" fill="#ffa06c" />
          <rect x="9" y="16" width="16" height="12" rx="2" fill="#ee6a3c" />
          <path d="M20 19l42-6c6 0 8 10 4 13l-42 7z" fill="#6a8dfa" /><path d="M24 20l38-5" stroke="#a5cbff" stroke-width="4" />
          <ellipse cx="22" cy="25" rx="6" ry="7.500" fill="#5a6ff0" /><path d="M22 29v-6c3-1 4 3 1 3" fill="none" stroke="#2b2f9f" stroke-width="1.500" />
        </svg>
      </div>
      <div class="apps">
        <span v-for="n in taskIcons" :key="n" :class="['app', n]"><i><svg viewBox="0 0 24 24" v-html="icons[n]" /></i></span>
      </div>
      <div class="stock">
        <svg width="38" height="48" viewBox="0 0 38 48">
          <path d="M3 17c6 7 14 12 29 15M24 37l8-3" fill="none" stroke="#2f9e12" stroke-width="4" stroke-linecap="round" />
          <path d="M1 29l6 3v16H1z" fill="#1f8a1a" /><path d="M10 36l6 3v9h-6z" fill="#3fa31a" /><path d="M19 40l6 2v6h-6z" fill="#5bbb15" /><path d="M28 43l6 2v3h-6z" fill="#78cc12" />
          <circle cx="28" cy="17" r="12" fill="#c42b1c" />
          <text x="28" y="23" font-size="17" fill="#fff" text-anchor="middle" font-family="Open Sans">1</text>
        </svg>
        <div><p>深证成指</p><p class="down-rate">-0.72%</p></div>
      </div>
      <div class="clock"><p>10:34</p><p>2024/6/20</p></div>
    </div>
  </div>
</template>

<style>
html, body { margin: 0; overflow: hidden; }
</style>

<style scoped>
.screen { width: 3840px; height: 2146px; overflow: hidden; display: flex; flex-direction: column; background: #f7f7f7; font-family: "Open Sans", "Noto Sans CJK SC", sans-serif; color: #111; }
svg { flex: none; display: block; overflow: visible; }
.i18 { width: 18px; height: 18px; }
.i20 { width: 20px; height: 20px; }
.i22 { width: 22px; height: 22px; }
.i24 { width: 24px; height: 24px; }
.i26 { width: 26px; height: 26px; }

.tabs { height: 48px; flex: none; display: flex; align-items: center; background: #cdcdcd; }
.lead { width: 143px; box-sizing: border-box; padding-left: 26px; display: flex; gap: 38px; align-items: center; }
.tab { width: 259.6px; height: 48px; box-sizing: border-box; padding-left: 17px; display: flex; align-items: center; background: linear-gradient(#777, #777) 0 10px / 1.500px 30px no-repeat; }
.tab-label { width: 164px; margin: 0 9px 0 13px; white-space: nowrap; font-size: 18px; letter-spacing: -0.720px; line-height: 28px; }
.han { letter-spacing: 0; }
.fade { mask-image: linear-gradient(to right, #000 138px, transparent 164px); }
.active { position: relative; background: #f7f7f7; border-radius: 10px 10px 0 0; }
.active::before, .active::after { content: ""; position: absolute; bottom: 0; width: 8px; height: 8px; }
.active::before { left: -8px; background: radial-gradient(circle at 0 0, transparent 8px, #f7f7f7 8px); }
.active::after { right: -8px; background: radial-gradient(circle at 100% 0, transparent 8px, #f7f7f7 8px); }
.new-tab { width: 22px; height: 22px; margin-left: 20px; }
.win-buttons { margin-left: auto; display: flex; }
.win-buttons span { width: 69px; display: flex; justify-content: center; }

.toolbar { height: 56px; flex: none; display: flex; align-items: center; }
.back { width: 24px; height: 22px; margin-left: 30px; }
.reload { width: 25px; height: 25px; margin-left: 42px; }
.address { width: 3076px; height: 45px; margin: 0 9px 0 29px; box-sizing: border-box; padding-left: 27px; border-radius: 23px; background: #fff; box-shadow: 0 0 5px 2px rgba(0, 0, 0, 0.060); display: flex; align-items: center; font-size: 21px; }
.insecure { margin-left: 12px; color: #666; font-family: "Noto Sans CJK SC", sans-serif; font-weight: 300; }
.bar { width: 2px; height: 24px; margin-left: 16px; background: #999; }
.bar.light { margin: 0 2px 0 0; width: 1.500px; background: #ccc; }
.url { margin-left: 20px; font-size: 20px; color: #767676; }
.url b { color: #000; font-weight: 400; letter-spacing: -0.350px; }
.addr-icons { margin-left: auto; margin-right: 24px; display: flex; gap: 34px; align-items: center; }
.tool { width: 67px; display: flex; justify-content: center; }
.tool.avatar svg { width: 34px; height: 34px; }
.tool.dots { width: 70px; }
.tool.last { width: 60px; }

.body { height: 1984px; flex: none; display: flex; }
.page { width: 3768px; height: 1978px; margin-left: 5px; border: 1px solid #e2e2e2; border-radius: 12px; overflow: hidden; display: grid; grid-template: 1954px 24px / 3745px 23px; background: #fcfcfc; box-shadow: 0 1px 2px rgba(0, 0, 0, 0.080); }
.content { position: relative; background: #fff; overflow: hidden; font-family: "Liberation Sans", "Noto Sans CJK SC", sans-serif; }
.navbar { height: 75px; border-bottom: 1px solid #e2e2e2; background: #f8f8f8; display: flex; align-items: stretch; line-height: 76px; color: #777; font-size: 21px; }
.brand { padding: 0 22.500px 0 23px; font-size: 27px; }
.item { padding: 0 22.500px; }
.item.on { background: #e7e7e7; color: #555; }
.push { margin-left: auto; }
.head { height: 38px; padding: 31.500px 47px 0 23px; display: flex; justify-content: space-between; }
h3, h4 { margin: 0; color: #333; font-weight: 700; white-space: nowrap; }
h3 { font-size: 31.500px; line-height: 36px; }
h3 small, h4 small { font-size: 21px; color: #bbb; margin-left: -2px; }
.gear { width: 26px; height: 26px; margin-top: 17.500px; }
.legend { height: 54.500px; box-sizing: border-box; padding: 22px 0 0 23px; display: flex; font-size: 21px; line-height: 30px; color: #999; }
.legend > div { width: 1872px; height: 30px; display: flex; flex: none; }
.legend .second { margin-top: 3px; }
.sw { width: 21px; height: 21px; margin: 1px 4px 0 0; border-radius: 4px; }
.grey { background: #dcdcdc; }
.blue { background: #97bbcd; }
.chart { overflow: hidden; }
.labels { font: 18px "Liberation Sans", sans-serif; fill: #666; }
.panels { display: flex; }
.panel { width: 1248.330px; flex: none; }
h4 { font-size: 25.200px; line-height: 30px; height: 30px; padding-left: 23px; }

.blob { position: absolute; left: -56px; top: 389px; width: 71px; height: 71px; border-radius: 50%; background: #d5fdef; box-shadow: 0 4px 10px rgba(0, 0, 0, 0.080); }
.pink { position: absolute; right: 0; top: 554px; width: 54px; height: 54px; border-radius: 27px 0 0 27px; background: linear-gradient(135deg, rgba(250, 170, 205, 0.850), #f799c1); box-shadow: 0 4px 14px rgba(0, 0, 0, 0.150); }
.pink svg { width: 26px; height: 25px; margin: 14px 0 0 19px; }
.float-a { position: absolute; left: 3684px; top: 1510px; width: 54px; height: 54px; border-radius: 50%; background: #f8f8f8; box-shadow: 0 2px 14px rgba(0, 0, 0, 0.180); }
.float-a svg { width: 26px; height: 26px; margin: 14px; }
.float-b { position: absolute; right: 0; top: 1578px; width: 72px; height: 66px; border-radius: 33px 0 0 33px; background: #f8f9fc; box-shadow: 0 4px 16px rgba(0, 0, 0, 0.160); }
.float-b svg { width: 35px; height: 33px; margin: 17px 0 0 21px; }

.vscroll { grid-row: 1 / 3; grid-column: 2; display: flex; flex-direction: column; align-items: center; padding-top: 13px; }
.vscroll i { width: 13px; height: 1798px; margin-top: 11px; border-radius: 7px; background: #8b8b8b; }
.vscroll .down { margin-top: 98px; }
.hscroll { grid-row: 2; grid-column: 1; display: flex; align-items: center; padding: 0 0 1px 12px; }
.hscroll i { width: 3674px; height: 13px; margin: 0 13px 0 12px; border-radius: 7px; background: #8b8b8b; }

.sidebar { width: 63px; display: flex; flex-direction: column; align-items: center; padding-top: 4px; }
.sidebar span { height: 60.200px; flex: none; display: flex; align-items: center; justify-content: center; }
.sidebar hr { width: 42px; height: 1px; margin: 0; border: 0; background: #ccc; flex: none; }
.sidebar hr.first { margin-top: 16px; }
.sidebar .add { margin-top: 18px; }
.add svg { width: 20px; height: 20px; }
.sidebar .snip { margin-top: 1331px; }
.sidebar .second-line { margin-top: 4px; }
.sidebar .cog { margin-top: 2px; }

.taskbar { height: 58px; flex: none; box-sizing: border-box; border-top: 2px solid #b0b1b1; background: #dadada; display: flex; align-items: flex-start; }
.start { width: 35px; height: 35px; margin: 17px 0 0 31px; }
.search { width: 325px; height: 50px; box-sizing: border-box; margin: 11px 0 0 22px; padding: 0 2px 4px 14px; border: 1px solid #c8c8c8; border-radius: 25px; background: #f4f4f4; display: flex; align-items: center; font-size: 21px; color: #555; }
.search span { margin-left: 15px; }
.art { width: 70px; height: 33px; margin-left: auto; }
.apps { display: flex; margin: 5px 0 0 6px; }
.app { width: 66px; display: flex; justify-content: center; }
.app i { width: 56px; height: 60px; border-radius: 6px; display: flex; justify-content: center; }
.app.edge i { background: #ededed; }
.app svg { width: 36px; height: 36px; margin-top: 11px; }
.pr svg, .steam svg, .drive svg { width: 33px; height: 33px; margin-top: 12px; }
.firefox svg { width: 32px; height: 34px; }
.task svg { width: 35px; height: 33px; }
.stock { height: 50px; margin-left: auto; display: flex; gap: 8px; padding-top: 2px; }
.stock > div { width: 80px; }
p { margin: 0; font-size: 18px; line-height: 24px; white-space: nowrap; }
.stock > div { margin-top: 7px; }
.down-rate { color: #107c10; letter-spacing: -0.500px; }
.clock { width: 151px; margin-right: 38px; text-align: right; color: #555; letter-spacing: -0.550px; margin-top: 9px; }
</style>
